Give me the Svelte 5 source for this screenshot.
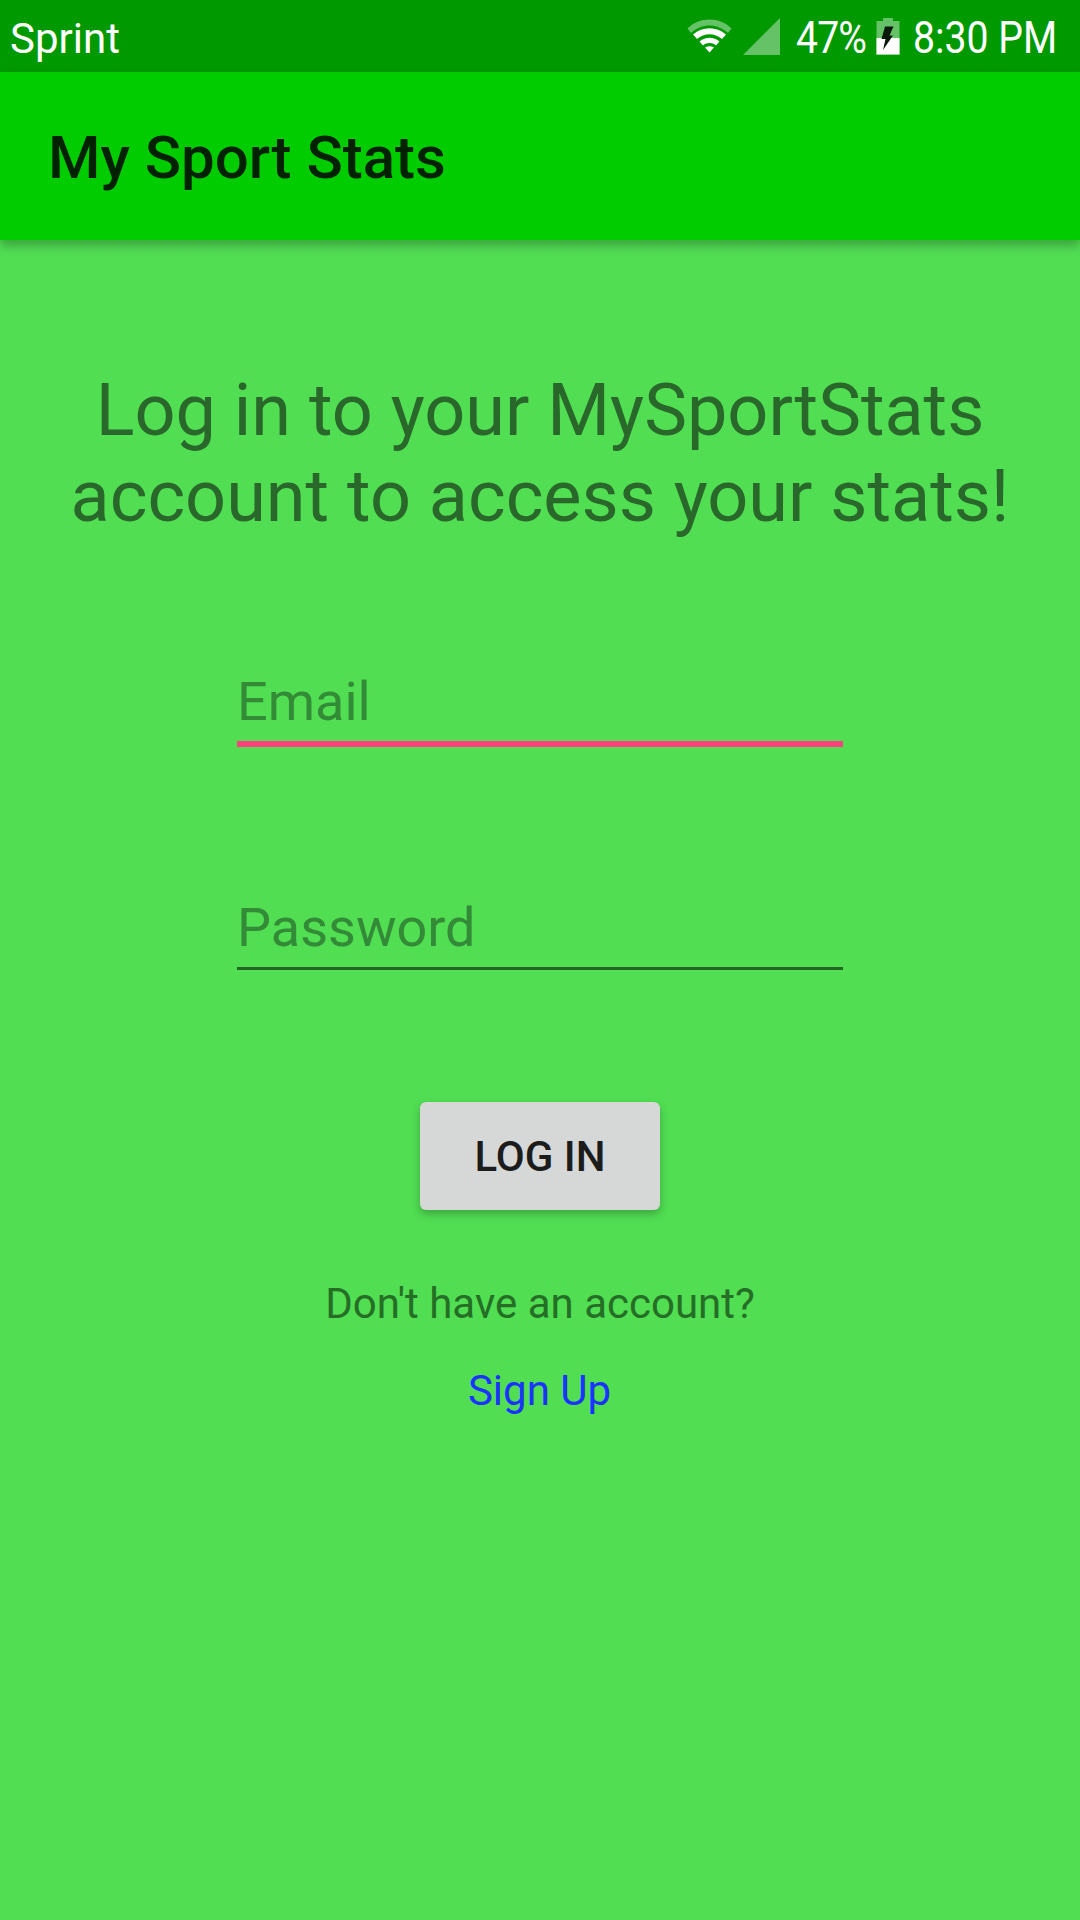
<script>
  const title = 'My Sport Stats';
</script>

<div class="screen">
  <header class="status">
    <span class="carrier">Sprint</span>
    <div class="status-right">
      <svg class="wifi" width="45" height="34" viewBox="0 0 45 34">
        <path d="M0.500 9.500 C12 -2.500 33 -2.500 44.500 9.500 L41 14 C30.500 4 14.500 4 4 14 Z" fill="#fff" opacity="0.4"/>
        <path d="M6 15.500 C15.500 7 29.500 7 39 15.500 L35 20 C27.500 13.500 17.500 13.500 10 20 Z" fill="#fff"/>
        <path d="M12.500 22.500 C18.500 17.500 26.500 17.500 32.500 22.500 L29 26.500 C25 23.300 20 23.300 16 26.500 Z" fill="#fff"/>
        <path d="M18 28.500 C21 26.700 24 26.700 27 28.500 L22.500 33.500 Z" fill="#fff"/>
      </svg>
      <svg class="signal" width="37" height="37" viewBox="0 0 37 37">
        <path d="M0 37 L37 0 V37 Z" fill="#fff" opacity="0.4"/>
      </svg>
      <span class="cond pct">47%</span>
      <svg class="battery" width="24" height="37" viewBox="0 0 24 37">
        <path d="M7 0 H17 V3 H23.500 V36.500 H0.500 V3 H7 Z" fill="#fff" opacity="0.4"/>
        <rect x="0.500" y="20" width="23" height="16.500" fill="#fff"/>
        <path d="M9 8.500 H17.500 L13.500 17.500 H17 L7 32 L9.500 21 H5.500 Z" fill="#0a1a0a"/>
      </svg>
      <span class="cond time">8:30 PM</span>
    </div>
  </header>

  <div class="toolbar">
    <h1>{title}</h1>
  </div>

  <main class="content">
    <h2>Log in to your MySportStats account to access your stats!</h2>
    <div class="field focused"><span>Email</span></div>
    <div class="field"><span>Password</span></div>
    <button class="login">LOG IN</button>
    <p class="question">Don't have an account?</p>
    <a class="signup" href="#signup">Sign Up</a>
  </main>
</div>

<style>
  :global(body) {
    margin: 0;
    background: #51de53;
  }
  .screen {
    width: 1080px;
    height: 1920px;
    display: flex;
    flex-direction: column;
    font-family: Roboto, sans-serif;
    background: #51de53;
    overflow: hidden;
  }
  .status {
    height: 72px;
    flex: none;
    background: #009900;
    display: flex;
    align-items: center;
    justify-content: space-between;
    padding: 0 24px 0 10px;
    color: #fff;
    box-sizing: border-box;
  }
  .carrier {
    font-size: 42px;
    line-height: 72px;
    margin-top: 5px;
  }
  .status-right {
    display: flex;
    align-items: center;
  }
  .wifi {
    margin-right: 11px;
  }
  .signal {
    margin-right: 16px;
  }
  .cond {
    font-size: 45px;
    line-height: 72px;
    display: inline-block;
    transform: scaleX(0.87);
    transform-origin: left center;
    white-space: nowrap;
    margin-top: 4px;
  }
  .pct {
    width: 70px;
    margin-right: 10px;
    letter-spacing: -1px;
  }
  .battery {
    margin-right: 13px;
  }
  .time {
    width: 143px;
  }
  .toolbar {
    height: 168px;
    flex: none;
    background: #00cc00;
    display: flex;
    align-items: center;
    padding-left: 48px;
    box-shadow: 0 6px 10px rgba(0, 0, 0, 0.26);
    position: relative;
  }
  h1 {
    margin: 2px 0 0;
    font-size: 60px;
    font-weight: 500;
    color: #002200;
  }
  .content {
    flex: 1;
    display: flex;
    flex-direction: column;
    align-items: center;
    padding-top: 128px;
  }
  h2 {
    margin: 0 0 118px;
    width: 980px;
    font-size: 72px;
    font-weight: 400;
    line-height: 86px;
    text-align: center;
    color: #29682a;
  }
  .field {
    width: 606px;
    box-sizing: border-box;
    height: 90px;
    margin-bottom: 132px;
    border-bottom: 3px solid #246524;
    display: flex;
    align-items: flex-end;
    color: #338a37;
    font-size: 54px;
  }
  .field span {
    line-height: 64px;
    padding-bottom: 7px;
  }
  .focused {
    height: 89px;
    margin-bottom: 133px;
    border-bottom: 6px solid #ff4081;
  }
  .login {
    width: 240px;
    height: 108px;
    flex: none;
    border: none;
    border-radius: 6px;
    background: #d6d7d7;
    color: #1c1c1c;
    font-family: inherit;
    font-size: 42px;
    font-weight: 500;
    box-shadow: 0 4px 8px rgba(0, 0, 0, 0.25);
    padding: 0;
  }
  .question {
    margin: 69px 0 0;
    font-size: 42px;
    line-height: 50px;
    color: #256e25;
  }
  .signup {
    margin: 37px 1px 0 0;
    font-size: 42px;
    line-height: 50px;
    color: #1a33ff;
    text-decoration: none;
  }
</style>
